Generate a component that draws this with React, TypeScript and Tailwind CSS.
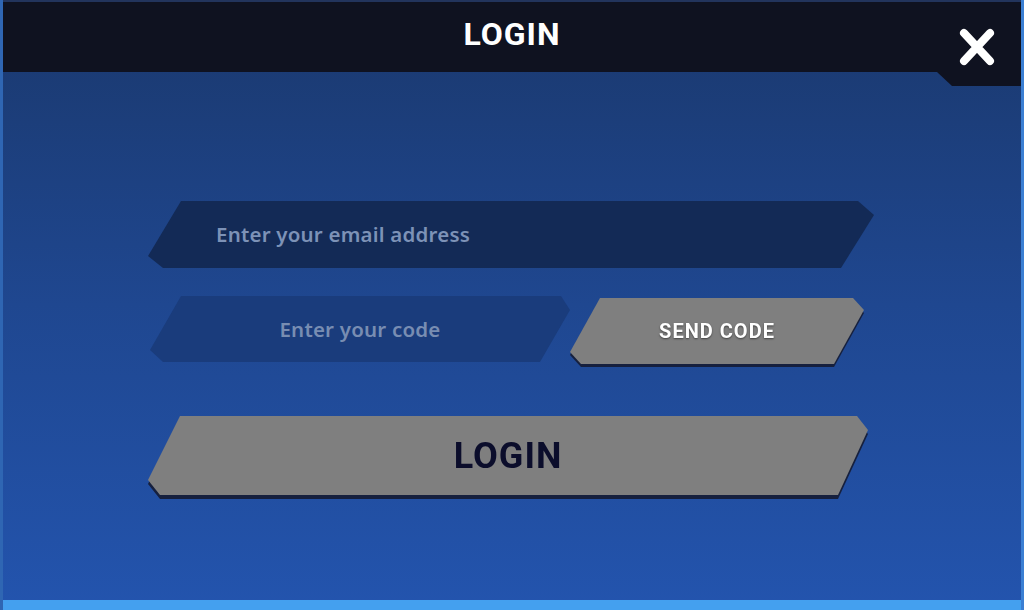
import React from 'react';

const heading = { fontFamily: 'Roboto, "Liberation Sans", sans-serif' };
const body = { fontFamily: '"Noto Sans", "Open Sans", sans-serif' };

const App = () => {
	return (
		<div className="relative w-[1024px] h-[610px] overflow-hidden bg-[#1c3a70]">
			<div className="flex h-full flex-col border-l-[3px] border-r-[3px] border-l-[#2f66b3] border-r-[#3b7fd3] bg-gradient-to-b from-[#1a386d] via-[#1f4790] to-[#2354ae]">
				{/* Header */}
				<div className="relative h-[72px] shrink-0 border-t-2 border-t-[#22345c] bg-[#0f1220]">
					<h1
						style={heading}
						className="pt-[12px] text-center text-[32px] font-bold leading-[40px] tracking-[1px] text-white"
					>
						LOGIN
					</h1>
					{/* notch under close button */}
					<div className="absolute right-0 top-[70px] h-[14px] w-[84px] bg-[#0f1220] [clip-path:polygon(0_0,100%_0,100%_100%,15px_100%)]" />
					<button className="absolute right-[24px] top-[24px] flex h-[42px] w-[40px] items-center justify-center">
						<svg width="38" height="38" viewBox="0 0 38 38">
							<path
								d="M6 5 L32 33 M32 5 L6 33"
								stroke="white"
								strokeWidth="8"
								strokeLinecap="round"
								fill="none"
							/>
						</svg>
					</button>
				</div>

				{/* Form */}
				<div className="flex flex-1 flex-col pl-[145px] pt-[129px]">
					<div className="flex h-[67px] w-[726px] items-center bg-[#132a56] pl-[68px] [clip-path:polygon(33px_0,710px_0,726px_14px,693px_67px,15px_67px,0_55px)]">
						<span style={body} className="text-[20.5px] font-semibold tracking-[0.2px] text-[#7d92b7]">
							Enter your email address
						</span>
					</div>

					<div className="mt-[28px] flex items-start">
						<div className="ml-[2px] flex h-[66px] w-[420px] items-center justify-center bg-[#1a3c7c] [clip-path:polygon(31px_0,411px_0,420px_14px,390px_66px,13px_66px,0_54px)]">
							<span style={body} className="text-[20.5px] font-semibold tracking-[0.2px] text-[#788db2]">
								Enter your code
							</span>
						</div>
						<div className="mt-[2px] drop-shadow-[0_3px_0_#16203e]">
							<button
								style={heading}
								className="flex h-[66px] w-[294px] items-center justify-center bg-[#7f7f7f] text-[20px] font-bold tracking-[1px] text-white [clip-path:polygon(30px_0,283px_0,294px_12px,264px_66px,11px_66px,0_54px)] [text-shadow:0_1px_2px_rgba(0,0,0,0.5)]"
							>
								SEND CODE
							</button>
						</div>
					</div>

					<div className="mt-[52px] drop-shadow-[0_4px_0_#16203e]">
						<button
							style={heading}
							className="flex h-[79px] w-[720px] items-center justify-center bg-[#7f7f7f] text-[36px] font-bold tracking-[1px] text-[#0b0d2b] [clip-path:polygon(32px_0,709px_0,720px_14px,690px_79px,12px_79px,0_64px)]"
						>
							LOGIN
						</button>
					</div>
				</div>

				<div className="h-[10px] shrink-0 bg-[#44a0ef]" />
			</div>
		</div>
	);
};

export default App;
